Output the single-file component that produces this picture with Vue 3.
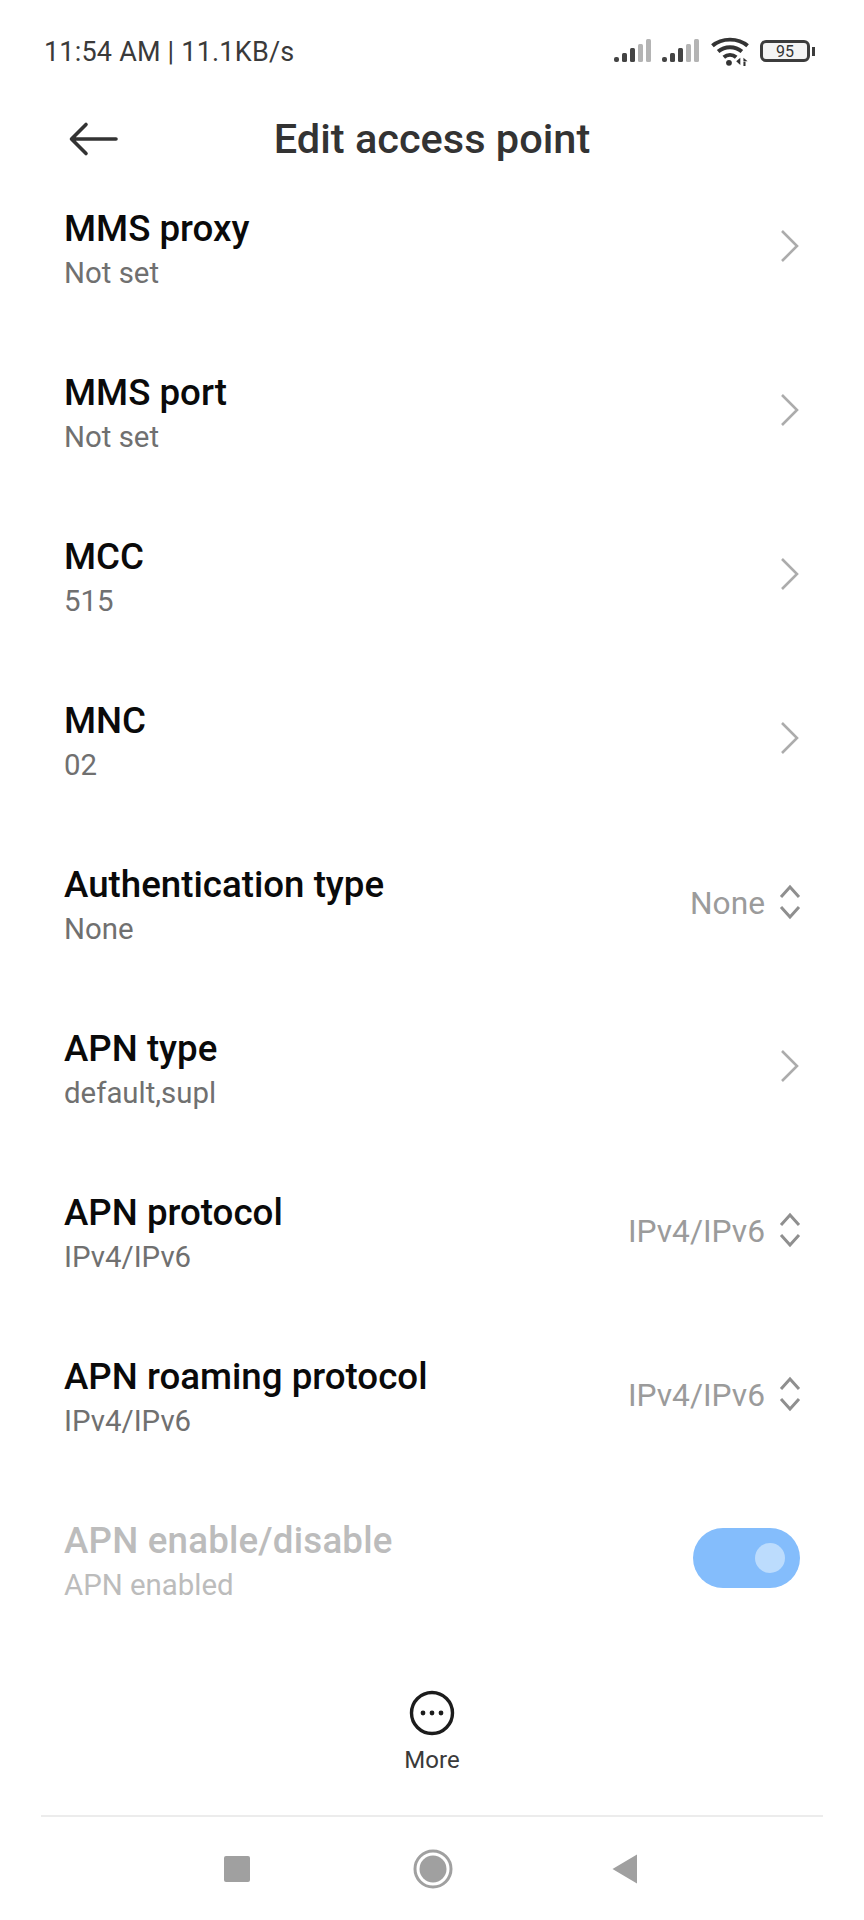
<template>
  <div class="page">
    <div class="status">
      <span class="clock">11:54 AM | 11.1KB/s</span>
      <div class="status-icons">
        <svg v-for="n in 2" :key="n" class="signal" width="38" height="26" viewBox="0 0 38 26">
          <rect x="0" y="19" width="5" height="5" rx="2" fill="#444" />
          <rect x="8" y="15" width="5" height="9" rx="1.5" fill="#444" />
          <rect x="16" y="10" width="5" height="14" rx="1.5" fill="#444" />
          <rect x="24" y="6" width="5" height="18" rx="1.5" fill="#b4b4b4" />
          <rect x="32" y="1" width="5" height="23" rx="1.5" fill="#b4b4b4" />
        </svg>
        <svg class="wifi" width="40" height="31" viewBox="0 0 38 30">
          <path d="M2 9.500C11 1.500 27 1.500 36 9.500" fill="none" stroke="#333" stroke-width="3.8" />
          <path d="M7.500 15C14 9.500 24 9.500 30.500 15" fill="none" stroke="#333" stroke-width="3.8" />
          <path d="M13 20.500C16.500 17.500 21.500 17.500 25 20.500" fill="none" stroke="#333" stroke-width="3.8" />
          <circle cx="18" cy="26" r="2.800" fill="#333" />
          <path d="M29 21v7l-4-3.500zM32 21l4 3.500h-4zM32 25h2v4h-2z" fill="#333" />
        </svg>
        <div class="battery"><span>95</span></div>
        <i class="battery-tip"></i>
      </div>
    </div>

    <header class="head">
      <svg class="back" width="50" height="36" viewBox="0 0 50 36">
        <path d="M48 18H4M18 3.500 3.500 18 18 32.500" fill="none" stroke="#333" stroke-width="3.600" stroke-linecap="round" stroke-linejoin="round" />
      </svg>
      <h1>Edit access point</h1>
    </header>

    <main class="list">
      <div v-for="row in rows" :key="row.title" class="row">
        <div class="text">
          <div class="title">{{ row.title }}</div>
          <div class="sub">{{ row.sub }}</div>
        </div>
        <template v-if="row.value">
          <span class="value">{{ row.value }}</span>
          <svg class="updown" width="22" height="36" viewBox="0 0 22 36">
            <path d="M2 13 11 3l9 10M2 23l9 10 9-10" fill="none" stroke="#8f8f8f" stroke-width="3" />
          </svg>
        </template>
        <svg v-else class="chevron" width="22" height="36" viewBox="0 0 22 36">
          <path d="M3 3l15 15L3 33" fill="none" stroke="#acacac" stroke-width="2.600" />
        </svg>
      </div>
      <div class="row disabled">
        <div class="text">
          <div class="title">APN enable/disable</div>
          <div class="sub">APN enabled</div>
        </div>
        <div class="toggle"><i></i></div>
      </div>
    </main>

    <div class="more">
      <svg width="46" height="46" viewBox="0 0 46 46">
        <circle cx="23" cy="23" r="20.500" fill="none" stroke="#1c1c1c" stroke-width="3.400" />
        <circle cx="14" cy="23" r="2.400" fill="#1c1c1c" />
        <circle cx="23" cy="23" r="2.400" fill="#1c1c1c" />
        <circle cx="32" cy="23" r="2.400" fill="#1c1c1c" />
      </svg>
      <span>More</span>
    </div>

    <nav class="nav">
      <i class="square"></i>
      <svg class="home" width="40" height="40" viewBox="0 0 40 40">
        <circle cx="20" cy="20" r="18" fill="none" stroke="#a0a0a0" stroke-width="3" />
        <circle cx="20" cy="20" r="13.500" fill="#a0a0a0" />
      </svg>
      <svg width="25" height="30" viewBox="0 0 25 30">
        <path d="M0.500 15 25 0.500V29.500z" fill="#a0a0a0" />
      </svg>
    </nav>
  </div>
</template>

<script setup>
const rows = [
  { title: "MMS proxy", sub: "Not set" },
  { title: "MMS port", sub: "Not set" },
  { title: "MCC", sub: "515" },
  { title: "MNC", sub: "02" },
  { title: "Authentication type", sub: "None", value: "None" },
  { title: "APN type", sub: "default,supl" },
  { title: "APN protocol", sub: "IPv4/IPv6", value: "IPv4/IPv6" },
  { title: "APN roaming protocol", sub: "IPv4/IPv6", value: "IPv4/IPv6" },
];
</script>

<style>
body {
  background: #fff;
}
</style>

<style scoped>
.page {
  height: 1920px;
  display: flex;
  flex-direction: column;
  background: #fff;
  font-family: Roboto, "Liberation Sans", sans-serif;
  overflow: hidden;
}
.status {
  height: 102px;
  flex: none;
  display: flex;
  align-items: center;
  justify-content: space-between;
  padding: 0 49px 0 44px;
}
.clock {
  font-size: 27px;
  color: #3a3a3a;
  letter-spacing: 0.2px;
  margin-top: 2px;
}
.status-icons {
  display: flex;
  align-items: center;
}
.signal {
  margin-right: 10px;
}
.wifi {
  margin: 0 10px 0 0;
}
.battery {
  width: 50px;
  height: 22px;
  box-sizing: border-box;
  border: 3px solid #3c3c3c;
  border-radius: 6px;
  display: flex;
  align-items: center;
  justify-content: center;
  background: #f4f4f4;
}
.battery span {
  font-size: 16px;
  color: #333;
}
.battery-tip {
  width: 3px;
  height: 9px;
  margin-left: 2px;
  background: #3c3c3c;
}
.head {
  height: 50px;
  margin-top: 12px;
  flex: none;
  position: relative;
  display: flex;
  align-items: center;
  justify-content: center;
}
.back {
  position: absolute;
  left: 68px;
  top: 7px;
}
.head h1 {
  margin: -2px 0 0;
  font-size: 41.5px;
  font-weight: 500;
  color: #333;
}
.list {
  flex: none;
  height: 1484px;
}
.row {
  height: 164px;
  display: flex;
  align-items: center;
  padding: 0 63px 0 64px;
}
.text {
  flex: 1;
  margin-top: 7px;
}
.title {
  font-size: 36.7px;
  line-height: 44px;
  font-weight: 500;
  color: #0a0a0a;
}
.sub {
  font-size: 29.4px;
  line-height: 38px;
  margin-top: 3px;
  color: #707070;
}
.value {
  font-size: 31.7px;
  color: #9b9b9b;
  margin: 3px 14px 0 0;
}
.chevron,
.updown {
  flex: none;
}
.disabled .title {
  color: #bcbcbc;
  letter-spacing: 0.2px;
}
.disabled .sub {
  color: #bcbcbc;
}
.toggle {
  width: 107px;
  height: 60px;
  margin-right: 1px;
  border-radius: 30px;
  background: #84bdfc;
  display: flex;
  align-items: center;
  justify-content: flex-end;
  padding-right: 15px;
  box-sizing: border-box;
}
.toggle i {
  width: 30px;
  height: 30px;
  border-radius: 50%;
  background: #bcdcfd;
}
.more {
  height: 0;
  flex: 1;
  display: flex;
  flex-direction: column;
  align-items: center;
  justify-content: center;
  gap: 10px;
}
.more span {
  font-size: 24px;
  color: #3a3a3a;
}
.nav {
  height: 103px;
  flex: none;
  margin: 0 41px;
  border-top: 2px solid #ececec;
  display: flex;
  align-items: center;
  padding-left: 183px;
}
.square {
  width: 26px;
  height: 26px;
  border-radius: 2px;
  background: #a0a0a0;
}
.home {
  margin: 0 159px 0 163px;
}
</style>
